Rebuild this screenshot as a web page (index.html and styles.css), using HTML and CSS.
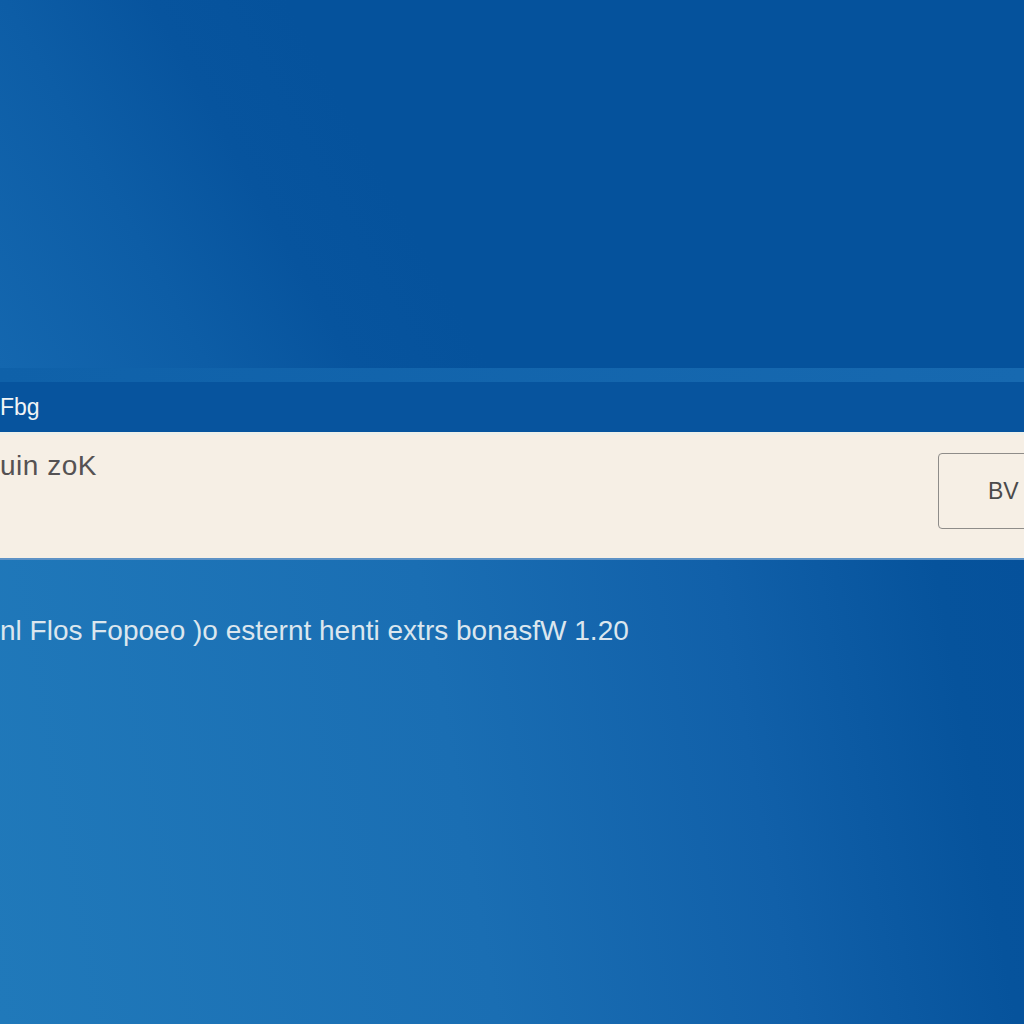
FILE: index.html
```html
<!DOCTYPE html>
<html lang="en">
<head>
    <meta charset="UTF-8">
    <meta name="viewport" content="width=device-width, initial-scale=1.0">
    <title>Fbg</title>
    <link rel="stylesheet" href="styles.css">
</head>
<body>

    <div class="desktop">
        <div class="wallpaper-top"></div>

        <div class="dialog">
            <div class="dialog-band"></div>
            <div class="dialog-title">Fbg</div>

            <div class="dialog-body">
                <p class="prompt">uin zoK</p>
                <button class="dialog-button">BV</button>
            </div>
        </div>

        <div class="wallpaper-bottom">
            <p class="status">nl Flos Fopoeo )o esternt henti extrs bonasfW 1.20</p>
        </div>
    </div>

</body>
</html>
```

FILE: styles.css
```css
html, body {
    margin: 0;
    padding: 0;
}
body {
    font-family: "Liberation Sans", Arial, sans-serif;
    width: 1024px;
    height: 1024px;
    overflow: hidden;
    background-color: #0a58a2;
}
.desktop {
    display: flex;
    flex-direction: column;
    height: 100%;
}
.wallpaper-top {
    height: 368px;
    flex-shrink: 0;
    background: linear-gradient(61deg, #1467af 0%, #0d5da6 17%, #07549e 29%, #05529c 40%, #05529c 100%);
}
.dialog-band {
    height: 14px;
    background: linear-gradient(90deg, #0f61a9, #1769b0);
}
.dialog-title {
    height: 50px;
    display: flex;
    align-items: center;
    background-color: #07549e;
    color: #f0f4f6;
    font-size: 23px;
}
.dialog-body {
    height: 128px;
    box-sizing: border-box;
    background-color: #f6efe5;
    border-top: 3px solid #eef0ea;
    border-bottom: 2px solid #5d92c6;
    display: flex;
    justify-content: space-between;
    align-items: flex-start;
}
.prompt {
    margin: 15px 0 0 0;
    font-size: 28px;
    color: #555253;
    letter-spacing: 0.5px;
}
.dialog-button {
    margin-top: 18px;
    margin-right: -40px;
    width: 126px;
    height: 76px;
    font-family: inherit;
    font-size: 23px;
    color: #4a4a4a;
    background-color: #f6efe5;
    border: 1px solid #8e8c89;
    border-radius: 4px;
    text-align: left;
    padding-left: 49px;
}
.wallpaper-bottom {
    flex: 1;
    background: linear-gradient(80deg, #2079ba 0%, #1a6eb3 45%, #1160a9 72%, #06539c 92%, #05519b 100%);
}
.status {
    margin: 55px 0 0 0;
    font-size: 28px;
    color: #dbe6ee;
}
```
